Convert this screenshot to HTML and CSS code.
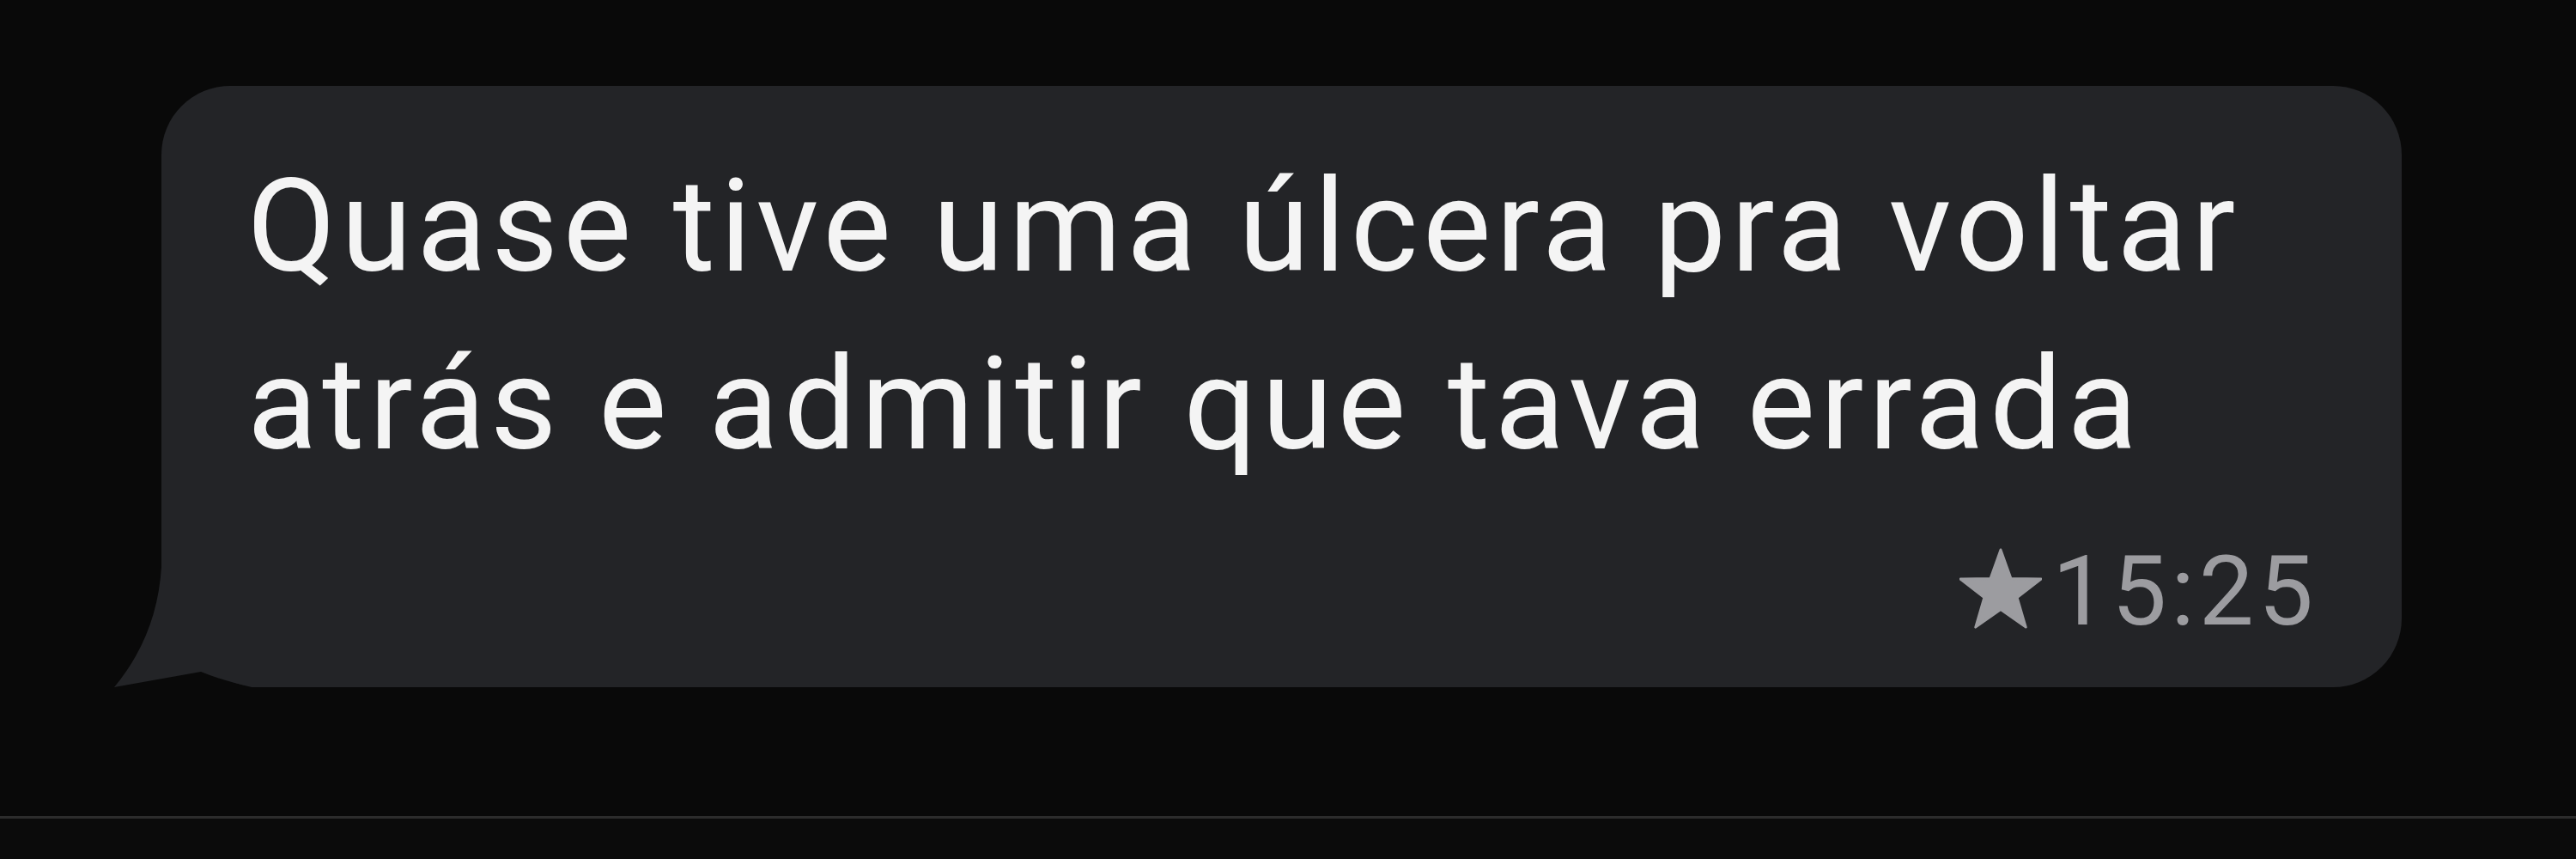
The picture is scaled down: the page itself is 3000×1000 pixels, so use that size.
FILE: index.html
```html
<!DOCTYPE html>
<html lang="pt">
<head>
<meta charset="utf-8">
<title>Mensagem</title>
<link rel="stylesheet" href="styles.css">
</head>
<body>
<main class="chat">
  <div class="bubble">
    <svg class="tail" viewBox="0 0 180 150" width="180" height="150" aria-hidden="true">
      <path d="M55 0 L55 10 Q50 90 0 150 L101 132 Q125 142 160 150 L180 150 L180 0 Z" fill="#232427"/>
    </svg>
    <p class="text">Quase tive uma úlcera pra voltar<br>atrás e admitir que tava errada</p>
    <div class="meta">
      <svg class="star" viewBox="0 0 100 100" width="96" height="96" aria-hidden="true">
        <path d="M50 2 L62.5 37 L99 37.5 L70 60 L80.5 96 L50 74.5 L19.5 96 L30 60 L1 37.5 L37.5 37 Z" fill="#9c9ca0" stroke="#9c9ca0" stroke-width="3" stroke-linejoin="round"/>
      </svg>
      <span class="time">15:25</span>
    </div>
  </div>
</main>
<div class="divider"></div>
<div class="footer"></div>
</body>
</html>
```
FILE: styles.css
```css
html, body {
  margin: 0;
  padding: 0;
}
body {
  background: #0a0a0a;
  width: 3000px;
  height: 1000px;
  overflow: hidden;
  font-family: "Roboto", "Inter", "Liberation Sans", sans-serif;
}
.chat {
  box-sizing: border-box;
  height: 950px;
  padding: 100px 0 0 188px;
  background: #090909;
}
.bubble {
  position: relative;
  box-sizing: border-box;
  width: 2609px;
  height: 700px;
  padding: 61px 98px 0 100px;
  background: #232427;
  border-radius: 80px 80px 80px 120px;
}
.tail {
  position: absolute;
  left: -55px;
  bottom: 0;
  display: block;
}
.text {
  position: relative;
  margin: 0;
  color: #f4f4f4;
  font-size: 150px;
  line-height: 207px;
  letter-spacing: 5.7px;
}
.meta {
  display: flex;
  justify-content: flex-end;
  align-items: center;
  gap: 12px;
  margin-top: 48px;
  height: 130px;
}
.star {
  display: block;
  margin-top: -4px;
}
.time {
  color: #9c9ca0;
  font-size: 114px;
  line-height: 130px;
  letter-spacing: 5px;
}
.divider {
  height: 3px;
  background: #2c2c2c;
}
.footer {
  height: 47px;
  background: #0b0b0b;
}
```
